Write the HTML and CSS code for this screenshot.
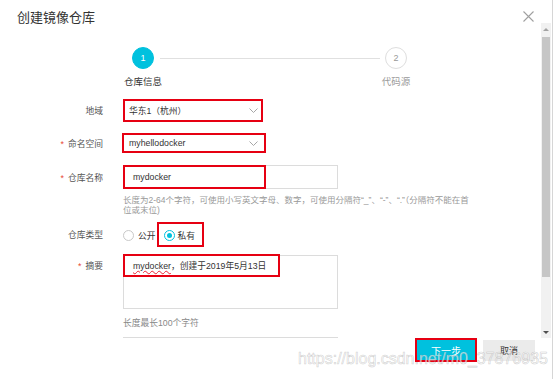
FILE: index.html
```html
<!DOCTYPE html>
<html lang="zh-CN">
<head>
<meta charset="utf-8">
<title>创建镜像仓库</title>
<link rel="stylesheet" href="styles.css">
</head>
<body>
<div class="dialog">
  <header class="dlg-head">
    <h1 class="dlg-title">创建镜像仓库</h1>
    <span class="dlg-close" aria-label="关闭"><svg width="11" height="11" viewBox="0 0 11 11"><path d="M0.5 0.5L10.5 10.5M10.5 0.5L0.5 10.5" stroke="#a0a0a0" stroke-width="1.1" fill="none"/></svg></span>
  </header>
  <div class="dlg-main">
    <div class="dlg-body">
      <div class="steps">
        <div class="step active"><span class="step-dot">1</span><span class="step-label">仓库信息</span></div>
        <div class="step-line"></div>
        <div class="step"><span class="step-dot">2</span><span class="step-label">代码源</span></div>
      </div>
      <div class="form">
        <div class="row r-region">
          <span class="lbl">地域</span>
          <div class="select sel-region annot">
            <span class="val">华东1（杭州）</span>
            <svg class="chev" width="9" height="5" viewBox="0 0 9 5"><path d="M0.5 0.5L4.5 4.5L8.5 0.5" stroke="#a6a6a6" stroke-width="1" fill="none"/></svg>
          </div>
        </div>
        <div class="row r-ns">
          <span class="lbl"><i class="req">*</i>命名空间</span>
          <div class="select sel-ns annot">
            <span class="val">myhellodocker</span>
            <svg class="chev" width="9" height="5" viewBox="0 0 9 5"><path d="M0.5 0.5L4.5 4.5L8.5 0.5" stroke="#a6a6a6" stroke-width="1" fill="none"/></svg>
          </div>
        </div>
        <div class="row r-name">
          <span class="lbl"><i class="req">*</i>仓库名称</span>
          <div class="input">
            <div class="input-mark annot"><span class="val">mydocker</span></div>
          </div>
        </div>
        <p class="help">长度为2-64个字符，可使用小写英文字母、数字，可使用分隔符“_”、“-”、“.”（分隔符不能在首位或末位)</p>
        <div class="row r-type">
          <span class="lbl">仓库类型</span>
          <div class="radios">
            <span class="radio"><span class="radio-dot"></span><span class="radio-text">公开</span></span>
            <span class="radio checked annot"><span class="radio-dot"></span><span class="radio-text">私有</span></span>
          </div>
        </div>
        <div class="row r-desc">
          <span class="lbl"><i class="req">*</i>摘要</span>
          <div class="textarea">
            <div class="textarea-mark annot"><span class="val"><span class="spell">mydocker</span>，创建于2019年5月13日</span></div>
          </div>
        </div>
        <p class="counter">长度最长100个字符</p>
        <div class="next-box"></div>
      </div>
    </div>
    <div class="scrollbar">
      <div class="sb-btn up"><span class="tri-up"></span></div>
      <div class="sb-track"><div class="sb-thumb"></div></div>
      <div class="sb-btn down"><span class="tri-down"></span></div>
    </div>
  </div>
  <footer class="dlg-foot">
    <span class="btn btn-primary">下一步</span>
    <span class="btn btn-default">取消</span>
  </footer>
  <div class="watermark">https://blog.csdn.net/m0_37876935</div>
</div>
</body>
</html>
```
FILE: styles.css
```css
* { box-sizing: border-box; }
html, body { margin: 0; padding: 0; background: #fff; }
body {
  font-family: "Liberation Sans", "Noto Sans CJK SC", sans-serif;
  color: #333;
}
.dialog {
  position: relative;
  width: 553px;
  height: 379px;
  border-right: 1px solid #d6d6d6;
  display: flex;
  flex-direction: column;
  overflow: hidden;
}
.dlg-head {
  height: 23px;
  flex: none;
  display: flex;
  justify-content: space-between;
  align-items: flex-start;
  padding: 10px 18px 0 17px;
}
.dlg-title {
  margin: 0;
  font-size: 13px;
  line-height: 14px;
  font-weight: normal;
  color: #333;
  font-family: "Noto Sans CJK SC", sans-serif;
}
.dlg-close { display: block; width: 11px; height: 11px; margin-top: 1px; }
.dlg-close svg { display: block; }

.dlg-main { height: 315px; flex: none; display: flex; }
.dlg-body { flex: 1; overflow: hidden; padding-top: 24px; }

/* steps */
.steps { display: flex; align-items: flex-start; width: 275px; margin-left: 132px; }
.step { width: 22px; flex: none; display: flex; flex-direction: column; align-items: center; }
.step-dot {
  width: 22px; height: 22px; border-radius: 50%;
  border: 1px solid #dedede; color: #999;
  font-size: 9px; line-height: 20px; text-align: center;
}
.step.active .step-dot { background: #00c1de; border-color: #00c1de; color: #fff; }
.step-label {
  margin-top: 6px; white-space: nowrap;
  font-size: 9.5px; line-height: 12px; color: #999;
  font-family: "Noto Sans CJK SC", sans-serif;
}
.step.active .step-label { color: #333; }
.step-line { flex: 1; height: 1px; background: #e0e0e0; margin: 11px 5px 0 6px; }

/* form */
.form { font-size: 8.75px; }
.row { display: flex; align-items: center; }
.lbl {
  width: 103px; margin-right: 20px; flex: none;
  text-align: right; color: #555; white-space: nowrap;
  font-family: "Noto Sans CJK SC", sans-serif;
}
.req { font-style: normal; color: #e8452f; margin-right: 4px; font-family: "Liberation Sans", sans-serif; }
.annot { border: 2px solid #e60012; }
.val { color: #333; white-space: nowrap; }

.select { display: flex; align-items: center; justify-content: space-between; }
.chev { display: block; }
.r-region { margin-top: 12px; }
.sel-region { width: 140px; height: 23px; padding: 0 3px 0 4px; }
.r-ns { margin-top: 11px; }
.sel-ns { width: 144px; height: 20px; margin-left: -1px; padding: 0 6px 0 5px; }

.r-name { margin-top: 12px; }
.input { width: 215px; height: 24px; border: 1px solid #dcdcdc; display: flex; }
.input-mark { width: 143px; height: 24px; margin: -1px 0 0 -1px; padding-left: 8px; display: flex; align-items: center; }

.help {
  margin: 6px 0 0 123px; width: 350px;
  font-size: 8.5px; line-height: 10px; color: #999;
}

.r-type { margin-top: 7px; height: 25px; }
.radios { display: flex; align-items: center; height: 25px; }
.radio { display: flex; align-items: center; height: 25px; padding-top: 2px; }
.radio.checked { padding: 2px 7px 0 5px; margin-left: 1px; }
.radio-dot {
  width: 11px; height: 11px; border-radius: 50%;
  border: 1px solid #c9c9c9; background: #fff; flex: none;
  display: flex; align-items: center; justify-content: center;
}
.radio.checked .radio-dot { border-color: #00c1de; }
.radio.checked .radio-dot::after { content: ""; width: 5px; height: 5px; border-radius: 50%; background: #00c1de; }
.radio-text { margin-left: 4px; color: #333; font-family: "Noto Sans CJK SC", sans-serif; }
.radio.checked .radio-text { margin-left: 3px; }

.r-desc { margin-top: 7px; align-items: flex-start; }
.r-desc .lbl { line-height: 23px; }
.textarea { width: 215px; height: 54px; margin-top: 1px; border: 1px solid #dcdcdc; }
.textarea-mark { width: 157px; height: 23px; margin: -2px 0 0 -1px; padding-left: 8px; display: flex; align-items: center; }
.spell { text-decoration: underline wavy #e23; text-decoration-thickness: 0.5px; text-underline-offset: 1px; }

.counter { margin: 9px 0 0 123px; font-size: 8.75px; line-height: 10px; color: #888; }
.next-box { margin: 9px 0 0 123px; width: 215px; height: 30px; border: 1px solid #dcdcdc; }

/* scrollbar */
.scrollbar { width: 10px; margin-right: 1px; flex: none; background: #f1f1f1; display: flex; flex-direction: column; }
.sb-btn { height: 12px; flex: none; display: flex; align-items: center; justify-content: center; }
.tri-up { width: 0; height: 0; border-left: 3px solid transparent; border-right: 3px solid transparent; border-bottom: 3px solid #a3a3a3; }
.tri-down { width: 0; height: 0; border-left: 3px solid transparent; border-right: 3px solid transparent; border-top: 3px solid #505050; }
.sb-track { flex: 1; padding: 2px 1px 0; }
.sb-thumb { height: 240px; background: #c6c6c6; }

/* footer */
.dlg-foot { flex: 1; display: flex; justify-content: flex-end; align-items: flex-start; gap: 6px; padding-right: 17px; }
.btn {
  display: flex; align-items: center; justify-content: center;
  font-family: "Noto Sans CJK SC", sans-serif; white-space: nowrap;
}
.btn-primary { width: 62px; height: 24px; background: #00c1de; color: #fff; border: 2px solid #e60012; font-size: 10px; }
.btn-default { width: 52px; height: 21px; margin-top: 2px; background: #ebebeb; color: #333; font-size: 9px; }

/* watermark overlay */
.watermark {
  position: absolute; left: 298px; top: 350px;
  font-family: "Liberation Sans", sans-serif; font-size: 16px; line-height: 18px;
  color: rgba(255,255,255,0.65);
  -webkit-text-stroke: 0.6px rgba(150,150,150,0.45);
  white-space: nowrap; pointer-events: none;
}
```
